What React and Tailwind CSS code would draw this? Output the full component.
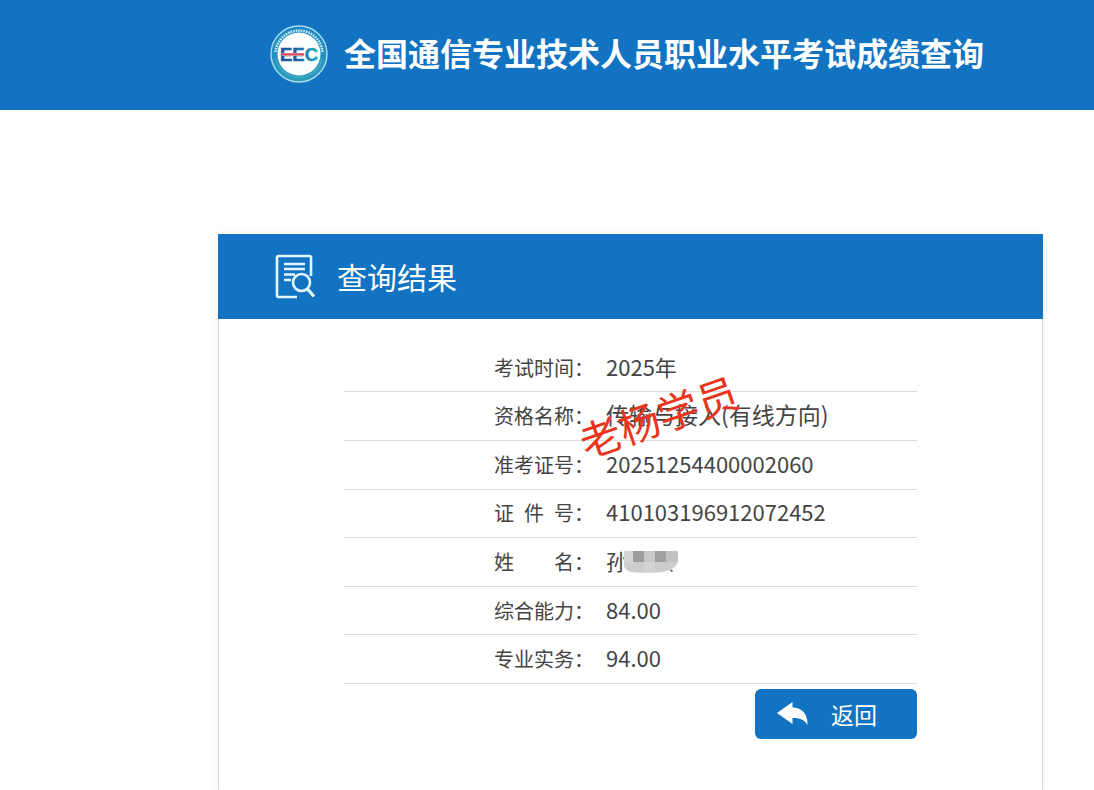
const rows = [
  { label: "考试时间", value: "2025年", size: "text-[22px]" },
  { label: "资格名称", value: "传输与接入(有线方向)", size: "text-[23px]" },
  { label: "准考证号", value: "20251254400002060", size: "text-[22px]" },
  { label: "证\u2002件\u2002号", value: "410103196912072452", size: "text-[22px]" },
  { label: "姓\u2003\u2003名", value: "孙", size: "text-[22px]", masked: true },
  { label: "综合能力", value: "84.00", size: "text-[22px]" },
  { label: "专业实务", value: "94.00", size: "text-[22px]" },
];

function Logo() {
  return (
    <svg className="size-[58px] shrink-0" viewBox="0 0 58 58" aria-hidden="true">
      <defs>
        <linearGradient id="ring" x1="0" y1="0" x2="0" y2="1">
          <stop offset="0" stopColor="#1b84c6" />
          <stop offset="1" stopColor="#2b9dbb" />
        </linearGradient>
        <linearGradient id="letters" x1="0" y1="0" x2="1" y2="0">
          <stop offset="0" stopColor="#214f9c" />
          <stop offset="0.55" stopColor="#1c6db0" />
          <stop offset="1" stopColor="#2bb3bd" />
        </linearGradient>
      </defs>
      <circle cx="29" cy="29" r="28" fill="url(#ring)" stroke="#a9dcea" strokeWidth="1.4" />
      <path d="M5.500 27A23.600 23.600 0 0 1 52.500 27" fill="none" stroke="#c3e8f5" strokeWidth="2.6" strokeDasharray="1.7 0.9" />
      <path d="M6 34A23.600 23.600 0 0 0 52 34" fill="none" stroke="#5bb9cc" strokeWidth="1.6" strokeDasharray="1 1" />
      <circle cx="29" cy="29" r="21.5" fill="#fbfeff" />
      <text x="29" y="36" textAnchor="middle" fill="url(#letters)" stroke="url(#letters)" strokeWidth="0.5" fontFamily="Liberation Sans, sans-serif" fontWeight="700" fontSize="18.500">EEC</text>
      <rect x="12" y="28" width="22" height="2.8" fill="#fbfeff" />
      <rect x="12" y="28.300" width="22" height="2.2" fill="#dc3f50" />
    </svg>
  );
}

function SearchDocIcon() {
  return (
    <svg className="h-[45px] w-10 shrink-0" viewBox="0 0 40 45" fill="none" stroke="#e4f7ff" aria-hidden="true">
      <path d="M36 22V3.500Q36 2 34.500 2H3.500Q2 2 2 3.500V41.500Q2 43 3.500 43H22" strokeWidth="2.6" />
      <path d="M9 10H30M9 15H30M9 20.500H20M9 26H16" strokeWidth="2.6" />
      <circle cx="26.500" cy="28.500" r="8.500" strokeWidth="2.6" />
      <path d="M32.500 35L39 42.500" strokeWidth="3.2" />
    </svg>
  );
}

function BackArrow() {
  return (
    <svg className="h-6 w-8 shrink-0" viewBox="0 0 32 24" fill="#fff" aria-hidden="true">
      <path d="M0 11L15.500 0V5.500C25 5.500 31 12 30.500 23C27 17.500 23 16 15.500 16V22Z" />
    </svg>
  );
}

function NameMask() {
  return (
    <svg className="absolute top-[6px] left-[16px] h-[23px] w-14" viewBox="0 0 56 23" aria-hidden="true">
      <clipPath id="mask-shape">
        <path d="M2 1H56V11Q55 17 48 20Q40 23 28 22.500Q16 23 9 22Q3 20 2 16Z" />
      </clipPath>
      <g clipPath="url(#mask-shape)">
        <rect width="56" height="23" fill="#cdcdcd" />
        <rect width="11" height="12" fill="#d6d6d6" />
        <rect x="11" width="11" height="12" fill="#9d9d9d" />
        <rect x="22" width="11" height="12" fill="#c8c8c8" />
        <rect x="33" width="11" height="12" fill="#a0a0a0" />
        <rect x="44" width="12" height="12" fill="#c2c2c2" />
        <rect x="22" y="12" width="11" height="11" fill="#d3d3d3" />
      </g>
      <path d="M48.500 20l2 1.500" stroke="#444" strokeWidth="1.500" />
    </svg>
  );
}

export default function App() {
  return (
    <div className="flex min-h-screen flex-col bg-white font-['Noto_Sans_CJK_SC',sans-serif] text-[#444]">
      <header className="flex h-[110px] items-start gap-4 bg-[#1173c2] pt-[25px] pl-[270px]">
        <Logo />
        <h1 className="text-[32px] leading-[54px] font-bold whitespace-nowrap text-white">
          全国通信专业技术人员职业水平考试成绩查询
        </h1>
      </header>

      <main className="mt-[124px] mr-[51px] ml-[218px] flex flex-1 flex-col shadow-[0_0_8px_rgba(0,0,0,0.06)]">
        <div className="flex h-[85px] items-center gap-[22px] bg-[#1173c2] pl-[57px] text-white">
          <SearchDocIcon />
          <h2 className="pb-[2px] text-[30px] leading-[44px]">查询结果</h2>
        </div>

        <section className="flex-1 border-x border-[#d9d9d9] px-[125px] pt-[25px]">
          <div className="relative">
            <table className="h-[340px] w-full border-collapse">
              <tbody>
                {rows.map((row) => (
                  <tr key={row.label} className="border-b border-[#dcdcdc]">
                    <th scope="row" className="w-[250px] p-0 text-right text-xl leading-7 font-normal whitespace-nowrap">
                      {row.label}：
                    </th>
                    <td className={`p-0 pb-1 pl-3 leading-8 ${row.size}`}>
                      <div className="relative">
                        {row.value}
                        {row.masked && <NameMask />}
                      </div>
                    </td>
                  </tr>
                ))}
              </tbody>
            </table>
            <span className="pointer-events-none absolute top-[41px] left-[232px] -rotate-[19deg] text-[41px] leading-[60px] whitespace-nowrap text-[#e8351c]">
              老杨学员
            </span>
          </div>
          <div className="mt-[5px] flex justify-end">
            <button type="button" className="flex h-[50px] w-[162px] items-center gap-[22px] rounded-md bg-[#1173c2] pl-[22px] text-[23px] leading-8 text-white">
              <BackArrow />
              返回
            </button>
          </div>
        </section>
      </main>
    </div>
  );
}
